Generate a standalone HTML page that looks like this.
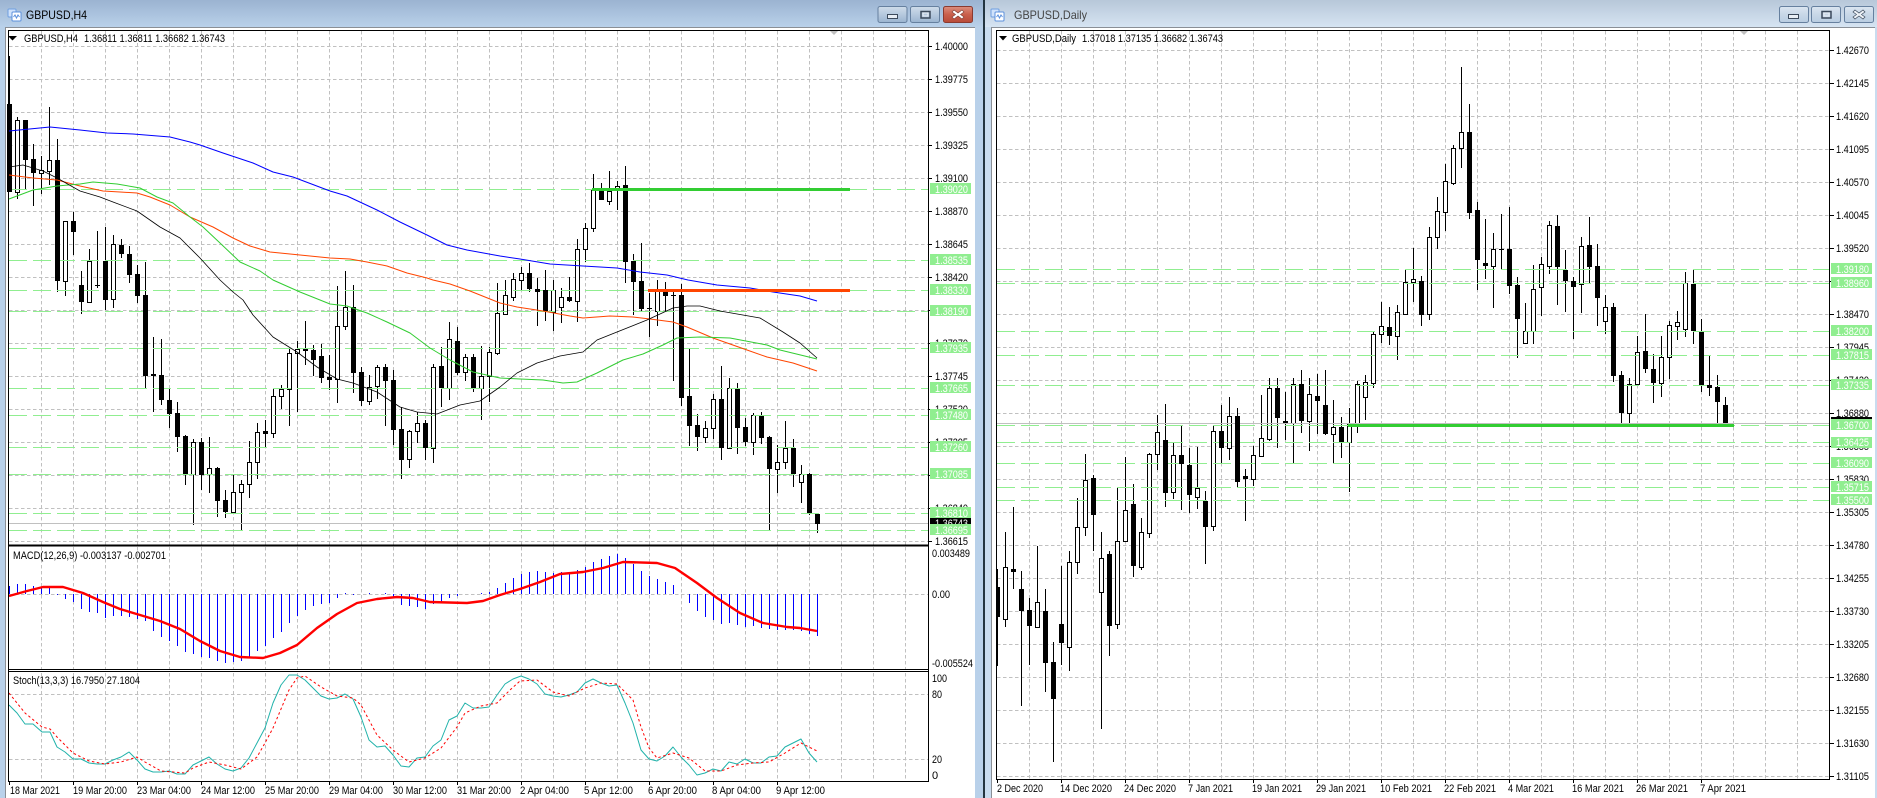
<!DOCTYPE html>
<html><head><meta charset="utf-8"><title>GBPUSD</title>
<style>
html,body{margin:0;padding:0;background:#fff;width:1877px;height:798px;overflow:hidden}
svg{display:block}
text{font-family:"Liberation Sans",sans-serif;font-size:11px;fill:#000}
.l text{fill:#fff}
.grid{fill:none;stroke:#c0c0c0;stroke-width:1;stroke-dasharray:3.5 2.5}
.lev{fill:none;stroke:#90ee90;stroke-width:1;stroke-dasharray:18 6}
.w{fill:none;stroke:#000;stroke-width:1}
.wb{fill:#fff;stroke:#000;stroke-width:1}
.ma{fill:none;stroke-linejoin:round}
</style></head><body>
<svg width="1877" height="798" viewBox="0 0 1877 798" xmlns="http://www.w3.org/2000/svg">
<defs>
<linearGradient id="ta" x1="0" y1="0" x2="0" y2="1"><stop offset="0" stop-color="#9bb3d1"/><stop offset="1" stop-color="#b9d1ea"/></linearGradient>
<linearGradient id="tb" x1="0" y1="0" x2="0" y2="1"><stop offset="0" stop-color="#b7c7d9"/><stop offset="1" stop-color="#d6e4f2"/></linearGradient>
<linearGradient id="bt" x1="0" y1="0" x2="0" y2="1"><stop offset="0" stop-color="#cfdcea"/><stop offset=".5" stop-color="#b6c9de"/><stop offset="1" stop-color="#9bb4d0"/></linearGradient>
<linearGradient id="bu" x1="0" y1="0" x2="0" y2="1"><stop offset="0" stop-color="#dbe6f1"/><stop offset=".5" stop-color="#c8d7e7"/><stop offset="1" stop-color="#b9cde2"/></linearGradient>
<linearGradient id="cl" x1="0" y1="0" x2="0" y2="1"><stop offset="0" stop-color="#dc8f7f"/><stop offset=".5" stop-color="#c9604c"/><stop offset="1" stop-color="#b84a38"/></linearGradient>
<g id="ic"><rect x="1" y="1" width="8" height="8" rx="1" fill="#cfe2fb" stroke="#6f9fe0"/><rect x="5" y="4" width="9" height="9" rx="1" fill="#fff" stroke="#5b90dc"/><path d="M6.5 9l1.5-2 1.5 3 1.500-3 1.500 2" fill="none" stroke="#5b90dc"/></g>
</defs>
<rect width="1877" height="798" fill="#fff"/>
<!-- chrome -->
<rect x="0" y="27" width="5" height="771" fill="#b9d1ea"/>
<rect x="975" y="27" width="8" height="771" fill="#b9d1ea"/>
<rect x="983" y="0" width="2" height="798" fill="#23343f"/>
<rect x="985" y="27" width="6" height="771" fill="#c9dcef"/>
<rect x="1875" y="27" width="2" height="771" fill="#c9dcef"/>
<rect x="0" y="0" width="983" height="27" fill="url(#ta)"/>
<rect x="985" y="0" width="892" height="27" fill="url(#tb)"/>
<rect x="5" y="27" width="970" height="1" fill="#8a8f96"/>
<rect x="5" y="27" width="1" height="771" fill="#8a8f96"/>
<rect x="991" y="27" width="884" height="1" fill="#8a8f96"/>
<rect x="991" y="27" width="1" height="771" fill="#8a8f96"/>
<use href="#ic" x="7" y="8"/><use href="#ic" x="990" y="8"/>
<text x="26" y="19" style="font-size:12px" textLength="61" lengthAdjust="spacingAndGlyphs">GBPUSD,H4</text>
<text x="1014" y="19" style="font-size:12px;fill:#444" textLength="73" lengthAdjust="spacingAndGlyphs">GBPUSD,Daily</text>
<!-- buttons -->
<g stroke="#66809f">
<rect x="878" y="6.500" width="29" height="16" rx="2" fill="url(#bt)"/>
<rect x="910.500" y="6.500" width="29" height="16" rx="2" fill="url(#bt)"/>
<rect x="943.500" y="6.500" width="29" height="16" rx="2" fill="url(#cl)" stroke="#8a3a30"/>
<rect x="1779.500" y="6.500" width="29" height="16" rx="2" fill="url(#bu)"/>
<rect x="1811.500" y="6.500" width="29" height="16" rx="2" fill="url(#bu)"/>
<rect x="1844.500" y="6.500" width="29" height="16" rx="2" fill="url(#bu)"/>
</g>
<g fill="#e8eef5" stroke="#3c4a5c">
<rect x="887.500" y="14.500" width="10" height="4"/>
<rect x="1788.500" y="14.500" width="10" height="4"/>
</g>
<g fill="none" stroke="#3c4a5c" stroke-width="1.500">
<rect x="921" y="11.500" width="9" height="6.500"/>
<rect x="1822" y="11.500" width="9" height="6.500"/>
</g>
<g fill="none" stroke="#e8eef5" stroke-width="1">
<rect x="923" y="13" width="5" height="3"/><rect x="1824" y="13" width="5" height="3"/>
</g>
<path d="M954 10l4 3 4-3 2 2-3.500 2.500 3.500 2.500-2 2-4-3-4 3-2-2 3.500-2.500-3.500-2.500z" fill="#fff" stroke="#7a3a30" stroke-width=".6"/>
<path d="M1855 10l4 3 4-3 2 2-3.500 2.500 3.500 2.500-2 2-4-3-4 3-2-2 3.500-2.500-3.500-2.500z" fill="#eef2f7" stroke="#3c4a5c" stroke-width=".7"/>

<!-- H4 grid -->
<path class="grid" d="M41.500 31V781M73.500 31V781M105.500 31V781M137.500 31V781M169.500 31V781M201.500 31V781M233.500 31V781M265.500 31V781M297.500 31V781M329.500 31V781M361.500 31V781M393.500 31V781M425.500 31V781M457.500 31V781M489.500 31V781M521.500 31V781M553.500 31V781M585.500 31V781M617.500 31V781M649.500 31V781M681.500 31V781M713.500 31V781M745.500 31V781M777.500 31V781M809.500 31V781M841.500 31V781M873.500 31V781M905.500 31V781"/>
<path class="grid" d="M9 46.500H928M9 79.500H928M9 112.500H928M9 145.500H928M9 178.500H928M9 211.500H928M9 244.500H928M9 277.500H928M9 310.500H928M9 343.500H928M9 376.500H928M9 409.500H928M9 442.500H928M9 475.500H928M9 508.500H928M9 541.500H928M9 594.500H928M9 694.500H928M9 759.500H928"/>
<!-- H4 wicks -->
<path class="w" d="M9.500 56V192M17.500 117V199M25.500 120V190M33.500 144V206M41.500 156V194M49.500 107V185M57.500 139V292M65.500 221V296M73.500 212V255M81.500 271V314M89.500 249V303M97.500 231V288M105.500 227V310M113.500 235V308M121.500 239V258M129.500 246V283M137.500 265V303M145.500 262V388M153.500 337V412M161.500 339V405M169.500 388V428M177.500 402V452M185.500 435V485M193.500 439V525M201.500 438V490M209.500 437V493M217.500 467V517M225.500 490V518M233.500 474V513M241.500 480V530M249.500 441V498M257.500 423V479M265.500 420V448M273.500 388V438M281.500 385V409M289.500 348V426M297.500 341V412M305.500 321V365M313.500 345V376M321.500 344V383M329.500 355V390M337.500 286V403M345.500 271V330M353.500 285V393M361.500 367V406M369.500 375V405M377.500 365V399M385.500 364V426M393.500 370V445M401.500 407V479M409.500 430V468M417.500 412V443M425.500 420V460M433.500 364V463M441.500 347V407M449.500 322V400M457.500 327V375M465.500 354V381M473.500 354V392M481.500 346V420M489.500 347V402M497.500 283V355M505.500 280V315M513.500 273V301M521.500 267V290M529.500 263V292M537.500 278V326M545.500 270V321M553.500 280V331M561.500 288V323M569.500 277V302M577.500 239V322M585.500 223V262M593.500 174V232M601.500 183V200M609.500 171V205M617.500 181V210M625.500 166V283M633.500 254V315M641.500 243V311M649.500 293V337M657.500 280V326M665.500 282V311M673.500 291V381M681.500 284V406M689.500 349V446M697.500 414V451M705.500 421V443M713.500 394V439M721.500 366V460M729.500 378V449M737.500 383V454M745.500 418V446M753.500 413V455M761.500 412V444M769.500 436V530M777.500 445V493M785.500 421V469M793.500 439V487M801.500 465V503M809.500 473V515M817.500 513V533"/>
<!-- H4 white bodies -->
<g transform="translate(0 .5)"><path class="wb" d="M15.500 120h4V192h-4zM39.500 170h4V173h-4zM47.500 160h4V171h-4zM63.500 221h4V281h-4zM87.500 261h4V302h-4zM111.500 244h4V299h-4zM191.500 442h4V474h-4zM207.500 468h4V474h-4zM231.500 492h4V512h-4zM239.500 484h4V492h-4zM247.500 462h4V484h-4zM255.500 432h4V462h-4zM271.500 396h4V433h-4zM279.500 389h4V396h-4zM287.500 353h4V389h-4zM295.500 349h4V353h-4zM335.500 326h4V379h-4zM343.500 307h4V326h-4zM367.500 387h4V401h-4zM375.500 367h4V386h-4zM407.500 431h4V459h-4zM415.500 423h4V431h-4zM431.500 367h4V448h-4zM447.500 339h4V388h-4zM463.500 357h4V372h-4zM479.500 376h4V388h-4zM487.500 352h4V376h-4zM495.500 313h4V353h-4zM503.500 295h4V314h-4zM511.500 279h4V297h-4zM519.500 273h4V280h-4zM551.500 290h4V312h-4zM559.500 297h4V307h-4zM575.500 249h4V301h-4zM583.500 228h4V249h-4zM591.500 190h4V228h-4zM607.500 191h4V201h-4zM615.500 186h4V189h-4zM655.500 290h4V311h-4zM703.500 428h4V437h-4zM711.500 399h4V428h-4zM727.500 388h4V448h-4zM751.500 415h4V442h-4zM775.500 462h4V469h-4zM783.500 448h4V462h-4zM799.500 474h4V482h-4z"/></g>
<!-- H4 levels -->
<path class="lev" d="M9 189.500H928M9 260.500H928M9 290.500H928M9 311.500H928M9 348.500H928M9 388.500H928M9 415.500H928M9 447.500H928M9 474.500H928M9 513.500H928M9 530.500H928"/>
<path d="M9 523.500H928" stroke="#c0c0c0" fill="none"/>
<!-- H4 black bodies -->
<path d="M7 104h5V192h-5zM23 120h5V160h-5zM31 159h5V173h-5zM55 160h5V281h-5zM71 221h5V232h-5zM79 285h5V302h-5zM95 285h5V286h-5zM103 261h5V300h-5zM119 245h5V254h-5zM127 254h5V275h-5zM135 274h5V296h-5zM143 295h5V376h-5zM151 374h5V376h-5zM159 375h5V400h-5zM167 400h5V414h-5zM175 413h5V437h-5zM183 436h5V474h-5zM199 442h5V475h-5zM215 468h5V501h-5zM223 500h5V512h-5zM263 431h5V434h-5zM303 349h5V351h-5zM311 350h5V360h-5zM319 356h5V378h-5zM327 377h5V380h-5zM351 307h5V373h-5zM359 372h5V401h-5zM383 367h5V381h-5zM391 380h5V430h-5zM399 429h5V460h-5zM423 423h5V448h-5zM439 366h5V388h-5zM455 341h5V373h-5zM471 357h5V388h-5zM527 273h5V289h-5zM535 289h5V292h-5zM543 290h5V311h-5zM567 297h5V301h-5zM599 191h5V200h-5zM623 185h5V262h-5zM631 261h5V282h-5zM639 281h5V309h-5zM647 308h5V309h-5zM663 292h5V296h-5zM671 295h5V296h-5zM679 295h5V398h-5zM687 396h5V426h-5zM695 425h5V437h-5zM719 399h5V448h-5zM735 389h5V428h-5zM743 427h5V442h-5zM759 416h5V438h-5zM767 437h5V469h-5zM791 448h5V474h-5zM807 474h5V513h-5zM815 514h5V524h-5z" fill="#000"/>
<!-- H4 MAs -->
<polyline class="ma" style="stroke-width:1" stroke="#0000ff" points="9,131 50,127 80,130 107,133 133,134 170,137 190,142 200,145 223,153 253,163 273,172 293,177 330,191 347,196 377,210 400,222 427,235 447,245 467,250 500,256 520,259 550,264 583,266 617,268 640,272 667,275 688,280 717,285 750,288 773,292 800,296 817,301"/>
<polyline class="ma" style="stroke-width:1" stroke="#ff4500" points="9,175 33,178 57,180 80,186 103,191 120,192 137,193 150,197 170,205 190,217 213,227 233,238 250,246 270,252 300,255 330,258 350,259 367,262 387,266 407,273 427,278 433,280 450,284 470,291 500,303 517,307 543,311 570,316 583,318 610,316 633,317 650,319 673,322 687,327 713,338 747,350 767,357 793,363 817,371"/>
<polyline class="ma" style="stroke-width:1" stroke="#32cd32" points="9,199 33,190 57,186 80,184 93,182 117,184 140,188 157,197 173,203 190,217 203,227 220,243 240,262 260,271 273,280 300,292 330,304 347,306 367,313 387,322 410,333 430,348 450,360 473,372 500,378 520,379 543,380 563,383 577,382 597,373 623,360 643,354 663,345 677,338 700,337 730,338 767,345 780,350 817,359"/>
<polyline class="ma" style="stroke-width:.8" stroke="#000" points="9,167 23,165 43,171 57,178 80,191 100,197 113,202 137,211 160,227 180,238 200,258 220,280 233,292 243,300 253,315 273,337 297,352 317,367 337,379 353,383 377,392 400,407 417,412 437,414 460,405 480,401 500,387 517,373 537,363 560,356 583,352 597,340 617,332 647,320 673,308 687,306 700,306 720,311 760,318 783,332 800,343 817,358"/>
<path d="M592 189.500H850" stroke="#32cd32" stroke-width="3" fill="none"/>
<path d="M648 290.500H850" stroke="#ff4500" stroke-width="3" fill="none"/>
<path d="M830 31h8l-4 4z" fill="#c0c0c0"/>
<!-- MACD hist -->
<path d="M9.500 594V586M17.500 594V584M25.500 594V584M33.500 594V586M41.500 594V587M49.500 594V588M57.500 594V595M65.500 594V599M73.500 594V602M81.500 594V609M89.500 594V612M97.500 594V613M105.500 594V618M113.500 594V616M121.500 594V616M129.500 594V617M137.500 594V619M145.500 594V621M153.500 594V631M161.500 594V637M169.500 594V641M177.500 594V646M185.500 594V652M193.500 594V654M201.500 594V657M209.500 594V658M217.500 594V661M225.500 594V663M233.500 594V662M241.500 594V661M249.500 594V657M257.500 594V651M265.500 594V646M273.500 594V638M281.500 594V632M289.500 594V623M297.500 594V616M305.500 594V610M313.500 594V606M321.500 594V604M329.500 594V603M337.500 594V598M345.500 594V593M353.500 594V595M369.500 594V593M385.500 594V593M393.500 594V598M401.500 594V605M409.500 594V606M417.500 594V607M425.500 594V609M433.500 594V604M441.500 594V603M449.500 594V598M457.500 594V596M481.500 594V593M489.500 594V592M497.500 594V588M505.500 594V583M513.500 594V578M521.500 594V574M529.500 594V572M537.500 594V571M545.500 594V572M553.500 594V573M561.500 594V572M569.500 594V573M577.500 594V570M585.500 594V567M593.500 594V562M601.500 594V559M609.500 594V556M617.500 594V554M625.500 594V558M633.500 594V564M641.500 594V571M649.500 594V576M657.500 594V579M665.500 594V582M673.500 594V585M689.500 594V603M697.500 594V611M705.500 594V617M713.500 594V620M721.500 594V624M729.500 594V623M737.500 594V625M745.500 594V627M753.500 594V626M761.500 594V628M769.500 594V629M777.500 594V630M785.500 594V630M793.500 594V630M801.500 594V631M809.500 594V634M817.500 594V636" stroke="#0000ff" fill="none"/>
<polyline class="ma" style="stroke-width:2.4" stroke="#ff0000" points="9,596 27,591 43,587 63,587 83,593 103,602 120,609 140,615 160,621 180,629 200,641 220,651 240,657 263,658 280,653 297,645 317,628 337,614 357,603 377,599 397,597 413,598 430,602 467,603 483,601 500,595 520,589 540,582 560,574 583,572 603,568 623,562 657,563 675,568 697,583 717,598 740,613 763,623 787,627 800,628 817,631"/>
<!-- Stoch -->
<polyline class="ma" style="stroke-width:1" stroke="#20b2aa" points="9,705 17,713 25,724 33,724 42,732 50,732 57,747 65,752 73,759 81,759 89,763 97,764 105,764 113,760 121,757 129,752 137,760 145,769 153,772 161,772 169,771 177,774 185,774 193,765 201,761 209,757 217,764 225,769 233,771 241,768 249,758 257,743 265,728 273,703 281,685 289,675 297,675 305,680 313,688 321,696 329,699 337,698 345,694 353,699 361,717 369,740 377,747 385,746 393,755 401,766 409,767 417,758 425,757 433,746 441,740 449,720 457,716 465,703 473,708 481,708 489,707 497,695 505,684 513,679 521,676 529,679 537,684 545,694 553,696 561,697 569,695 577,692 585,683 593,679 601,683 609,686 617,685 625,703 633,723 641,750 649,759 657,761 665,756 673,747 681,757 689,765 697,775 705,773 713,769 721,771 729,762 737,764 745,759 753,763 761,763 769,757 777,756 785,747 793,743 801,739 809,753 817,762"/>
<polyline class="ma" style="stroke-width:1" stroke="#ff0000" stroke-dasharray="2.500 2.500" points="9,693 25,713 42,727 50,729 57,737 73,753 89,761 105,764 121,762 137,757 145,762 161,771 185,773 193,768 209,762 225,765 241,769 257,757 265,743 273,728 289,690 297,678 305,676 321,687 337,696 353,698 361,705 377,735 393,750 409,762 425,758 441,748 457,727 465,713 481,706 497,703 510,690 520,681 537,680 553,692 569,696 585,688 601,683 617,684 633,700 641,727 649,748 657,758 673,753 689,758 705,771 721,771 737,765 753,763 769,762 785,753 801,743 817,751"/>
<!-- H4 frames -->
<g fill="#000">
<rect x="8" y="30" width="921" height="1"/>
<rect x="8" y="30" width="1" height="752"/>
<rect x="928" y="30" width="1" height="752"/>
<rect x="8" y="544.500" width="921" height="2"/>
<rect x="8" y="669" width="921" height="1"/>
<rect x="8" y="671" width="921" height="1"/>
<rect x="8" y="781" width="921" height="1"/>
</g>
<rect x="9" y="670" width="919" height="1" fill="#fff"/>
<path d="M928 46.500h4M928 79.500h4M928 112.500h4M928 145.500h4M928 178.500h4M928 211.500h4M928 244.500h4M928 277.500h4M928 310.500h4M928 343.500h4M928 376.500h4M928 409.500h4M928 442.500h4M928 475.500h4M928 508.500h4M928 541.500h4M9.500 781v4M73.500 781v4M137.500 781v4M201.500 781v4M265.500 781v4M329.500 781v4M393.500 781v4M457.500 781v4M521.500 781v4M585.500 781v4M649.500 781v4M713.500 781v4M777.500 781v4" stroke="#000" fill="none"/>
<!-- H4 text -->
<path d="M8 36h9l-4.500 4.500z" fill="#000"/>
<text x="24" y="42" textLength="54" lengthAdjust="spacingAndGlyphs">GBPUSD,H4</text>
<text x="84" y="42" textLength="141" lengthAdjust="spacingAndGlyphs">1.36811 1.36811 1.36682 1.36743</text>
<text x="13" y="559" textLength="153" lengthAdjust="spacingAndGlyphs">MACD(12,26,9) -0.003137 -0.002701</text>
<text x="13" y="684" textLength="127" lengthAdjust="spacingAndGlyphs">Stoch(13,3,3) 16.7950 27.1804</text>
<g>
<text x="935" y="50" textLength="33" lengthAdjust="spacingAndGlyphs">1.40000</text>
<text x="935" y="83" textLength="33" lengthAdjust="spacingAndGlyphs">1.39775</text>
<text x="935" y="116" textLength="33" lengthAdjust="spacingAndGlyphs">1.39550</text>
<text x="935" y="149" textLength="33" lengthAdjust="spacingAndGlyphs">1.39325</text>
<text x="935" y="182" textLength="33" lengthAdjust="spacingAndGlyphs">1.39100</text>
<text x="935" y="215" textLength="33" lengthAdjust="spacingAndGlyphs">1.38870</text>
<text x="935" y="248" textLength="33" lengthAdjust="spacingAndGlyphs">1.38645</text>
<text x="935" y="281" textLength="33" lengthAdjust="spacingAndGlyphs">1.38420</text>
<text x="935" y="347" textLength="33" lengthAdjust="spacingAndGlyphs">1.37970</text>
<text x="935" y="380" textLength="33" lengthAdjust="spacingAndGlyphs">1.37745</text>
<text x="935" y="413" textLength="33" lengthAdjust="spacingAndGlyphs">1.37520</text>
<text x="935" y="446" textLength="33" lengthAdjust="spacingAndGlyphs">1.37295</text>
<text x="935" y="479" textLength="33" lengthAdjust="spacingAndGlyphs">1.37065</text>
<text x="935" y="512" textLength="33" lengthAdjust="spacingAndGlyphs">1.36840</text>
<text x="935" y="545" textLength="33" lengthAdjust="spacingAndGlyphs">1.36615</text>
<text x="932" y="557" textLength="38" lengthAdjust="spacingAndGlyphs">0.003489</text>
<text x="932" y="598" textLength="18" lengthAdjust="spacingAndGlyphs">0.00</text>
<text x="932" y="667" textLength="41" lengthAdjust="spacingAndGlyphs">-0.005524</text>
<text x="932" y="682" textLength="15" lengthAdjust="spacingAndGlyphs">100</text>
<text x="932" y="698" textLength="10" lengthAdjust="spacingAndGlyphs">80</text>
<text x="932" y="763" textLength="10" lengthAdjust="spacingAndGlyphs">20</text>
<text x="932" y="779">0</text>
<text x="10" y="794" textLength="50" lengthAdjust="spacingAndGlyphs">18 Mar 2021</text>
<text x="73" y="794" textLength="54" lengthAdjust="spacingAndGlyphs">19 Mar 20:00</text>
<text x="137" y="794" textLength="54" lengthAdjust="spacingAndGlyphs">23 Mar 04:00</text>
<text x="201" y="794" textLength="54" lengthAdjust="spacingAndGlyphs">24 Mar 12:00</text>
<text x="265" y="794" textLength="54" lengthAdjust="spacingAndGlyphs">25 Mar 20:00</text>
<text x="329" y="794" textLength="54" lengthAdjust="spacingAndGlyphs">29 Mar 04:00</text>
<text x="393" y="794" textLength="54" lengthAdjust="spacingAndGlyphs">30 Mar 12:00</text>
<text x="457" y="794" textLength="54" lengthAdjust="spacingAndGlyphs">31 Mar 20:00</text>
<text x="520" y="794" textLength="49" lengthAdjust="spacingAndGlyphs">2 Apr 04:00</text>
<text x="584" y="794" textLength="49" lengthAdjust="spacingAndGlyphs">5 Apr 12:00</text>
<text x="648" y="794" textLength="49" lengthAdjust="spacingAndGlyphs">6 Apr 20:00</text>
<text x="712" y="794" textLength="49" lengthAdjust="spacingAndGlyphs">8 Apr 04:00</text>
<text x="776" y="794" textLength="49" lengthAdjust="spacingAndGlyphs">9 Apr 12:00</text>
</g>
<!-- H4 labels -->
<g fill="#90ee90">
<rect x="930" y="183" width="41" height="11"/><rect x="930" y="254" width="41" height="11"/><rect x="930" y="284" width="41" height="11"/><rect x="930" y="305" width="41" height="11"/><rect x="930" y="342" width="41" height="11"/><rect x="930" y="382" width="41" height="11"/><rect x="930" y="409" width="41" height="11"/><rect x="930" y="441" width="41" height="11"/><rect x="930" y="468" width="41" height="11"/><rect x="930" y="507" width="41" height="11"/>
</g>
<rect x="930" y="518" width="41" height="11" fill="#000"/>
<text x="935" y="527" style="fill:#fff" textLength="33" lengthAdjust="spacingAndGlyphs">1.36743</text>
<rect x="930" y="524" width="41" height="11" fill="#90ee90"/>
<g class="l">
<text x="935" y="193" textLength="33" lengthAdjust="spacingAndGlyphs">1.39020</text>
<text x="935" y="264" textLength="33" lengthAdjust="spacingAndGlyphs">1.38535</text>
<text x="935" y="294" textLength="33" lengthAdjust="spacingAndGlyphs">1.38330</text>
<text x="935" y="315" textLength="33" lengthAdjust="spacingAndGlyphs">1.38190</text>
<text x="935" y="352" textLength="33" lengthAdjust="spacingAndGlyphs">1.37935</text>
<text x="935" y="392" textLength="33" lengthAdjust="spacingAndGlyphs">1.37665</text>
<text x="935" y="419" textLength="33" lengthAdjust="spacingAndGlyphs">1.37480</text>
<text x="935" y="451" textLength="33" lengthAdjust="spacingAndGlyphs">1.37260</text>
<text x="935" y="478" textLength="33" lengthAdjust="spacingAndGlyphs">1.37085</text>
<text x="935" y="517" textLength="33" lengthAdjust="spacingAndGlyphs">1.36810</text>
<text x="935" y="534" textLength="33" lengthAdjust="spacingAndGlyphs">1.36695</text>
</g>

<!-- DAILY grid -->
<path class="grid" d="M1029.500 31V779M1061.500 31V779M1093.500 31V779M1125.500 31V779M1157.500 31V779M1189.500 31V779M1221.500 31V779M1253.500 31V779M1285.500 31V779M1317.500 31V779M1349.500 31V779M1381.500 31V779M1413.500 31V779M1445.500 31V779M1477.500 31V779M1509.500 31V779M1541.500 31V779M1573.500 31V779M1605.500 31V779M1637.500 31V779M1669.500 31V779M1701.500 31V779M1733.500 31V779M1765.500 31V779M1797.500 31V779"/>
<path class="grid" d="M997 50.500H1830M997 83.500H1830M997 116.500H1830M997 149.500H1830M997 182.500H1830M997 215.500H1830M997 248.500H1830M997 281.500H1830M997 314.500H1830M997 347.500H1830M997 380.500H1830M997 413.500H1830M997 446.500H1830M997 479.500H1830M997 512.500H1830M997 545.500H1830M997 578.500H1830M997 611.500H1830M997 644.500H1830M997 677.500H1830M997 710.500H1830M997 743.500H1830M997 776.500H1830"/>
<!-- DAILY wicks -->
<path class="w" d="M997.500 569V666M1005.500 532V627M1013.500 507V589M1021.500 571V706M1029.500 598V665M1037.500 546V628M1045.500 589V692M1053.500 642V762M1061.500 566V665M1069.500 551V671M1077.500 498V574M1085.500 454V536M1093.500 475V551M1101.500 532V729M1109.500 551V656M1117.500 488V629M1125.500 457V542M1133.500 484V577M1141.500 518V570M1149.500 453V538M1157.500 415V470M1165.500 404V507M1173.500 443V499M1181.500 426V510M1189.500 448V513M1197.500 447V509M1205.500 491V564M1213.500 426V531M1221.500 405V463M1229.500 397V460M1237.500 408V487M1245.500 469V521M1253.500 446V486M1261.500 395V456M1269.500 378V441M1277.500 378V448M1285.500 392V440M1293.500 378V463M1301.500 370V433M1309.500 378V451M1317.500 374V434M1325.500 370V435M1333.500 400V463M1341.500 417V458M1349.500 408V492M1357.500 381V433M1365.500 375V420M1373.500 332V388M1381.500 302V343M1389.500 307V345M1397.500 305V360M1405.500 270V314M1413.500 248V302M1421.500 276V326M1429.500 227V320M1437.500 197V249M1445.500 164V231M1453.500 145V185M1461.500 67V168M1469.500 104V219M1477.500 202V290M1485.500 219V279M1493.500 233V308M1501.500 214V269M1509.500 207V294M1517.500 277V358M1525.500 303V343M1533.500 265V344M1541.500 257V316M1549.500 221V274M1557.500 215V305M1565.500 250V312M1573.500 277V339M1581.500 237V313M1589.500 217V283M1597.500 244V326M1605.500 295V334M1613.500 303V382M1621.500 371V424M1629.500 378V424M1637.500 336V385M1645.500 314V373M1653.500 354V403M1661.500 336V397M1669.500 321V379M1677.500 311V340M1685.500 272V337M1693.500 270V344M1701.500 319V392M1709.500 356V396M1717.500 375V424M1725.500 397V424"/>
<!-- DAILY white bodies -->
<g transform="translate(0 .5)"><path class="wb" d="M1003.500 567h4V619h-4zM1035.500 602h4V627h-4zM1067.500 562h4V647h-4zM1075.500 527h4V562h-4zM1083.500 480h4V527h-4zM1099.500 558h4V592h-4zM1115.500 541h4V624h-4zM1123.500 510h4V541h-4zM1139.500 532h4V567h-4zM1147.500 454h4V533h-4zM1155.500 432h4V454h-4zM1171.500 455h4V492h-4zM1195.500 488h4V497h-4zM1211.500 431h4V526h-4zM1227.500 416h4V448h-4zM1251.500 455h4V479h-4zM1259.500 438h4V456h-4zM1267.500 388h4V439h-4zM1291.500 384h4V423h-4zM1307.500 394h4V421h-4zM1331.500 427h4V434h-4zM1347.500 424h4V442h-4zM1355.500 384h4V424h-4zM1363.500 382h4V397h-4zM1371.500 334h4V383h-4zM1379.500 326h4V334h-4zM1395.500 312h4V336h-4zM1403.500 282h4V314h-4zM1411.500 279h4V282h-4zM1427.500 237h4V314h-4zM1435.500 211h4V237h-4zM1443.500 181h4V212h-4zM1451.500 148h4V183h-4zM1459.500 132h4V148h-4zM1491.500 249h4V266h-4zM1523.500 331h4V343h-4zM1531.500 289h4V331h-4zM1539.500 264h4V287h-4zM1547.500 225h4V266h-4zM1579.500 246h4V284h-4zM1603.500 307h4V321h-4zM1627.500 384h4V413h-4zM1635.500 352h4V384h-4zM1659.500 357h4V383h-4zM1667.500 325h4V357h-4zM1675.500 322h4V326h-4zM1683.500 283h4V329h-4z"/></g>
<!-- DAILY levels -->
<path class="lev" d="M997 269.500H1830M997 283.500H1830M997 331.500H1830M997 355.500H1830M997 385.500H1830M997 425.500H1830M997 442.500H1830M997 463.500H1830M997 487.500H1830M997 500.500H1830"/>
<path d="M997 423.500H1830" stroke="#c0c0c0" fill="none"/>
<!-- DAILY black bodies -->
<path d="M995 587h5V617h-5zM1011 569h5V572h-5zM1019 589h5V611h-5zM1027 610h5V626h-5zM1043 611h5V663h-5zM1051 662h5V699h-5zM1059 624h5V643h-5zM1091 478h5V515h-5zM1107 554h5V626h-5zM1131 504h5V566h-5zM1163 440h5V493h-5zM1179 455h5V464h-5zM1187 465h5V495h-5zM1203 501h5V527h-5zM1219 431h5V448h-5zM1235 416h5V482h-5zM1243 476h5V479h-5zM1275 388h5V418h-5zM1283 421h5V423h-5zM1299 384h5V421h-5zM1315 396h5V401h-5zM1323 405h5V434h-5zM1339 427h5V442h-5zM1387 327h5V336h-5zM1419 281h5V315h-5zM1467 132h5V213h-5zM1475 210h5V260h-5zM1483 263h5V266h-5zM1499 249h5V250h-5zM1507 249h5V286h-5zM1515 285h5V319h-5zM1555 226h5V267h-5zM1563 270h5V281h-5zM1571 281h5V287h-5zM1587 245h5V267h-5zM1595 266h5V298h-5zM1611 307h5V376h-5zM1619 375h5V413h-5zM1643 351h5V369h-5zM1651 369h5V383h-5zM1691 284h5V331h-5zM1699 332h5V385h-5zM1707 385h5V388h-5zM1715 387h5V402h-5zM1723 405h5V423h-5z" fill="#000"/>
<path d="M1348 425.500H1734" stroke="#32cd32" stroke-width="3" fill="none"/>
<path d="M1740 31h8l-4 4z" fill="#c0c0c0"/>
<!-- DAILY frames -->
<rect x="992" y="28" width="4" height="770" fill="#fff"/>
<g fill="#000">
<rect x="996" y="30" width="834" height="1"/>
<rect x="996" y="30" width="1" height="750"/>
<rect x="1829" y="30" width="1" height="750"/>
<rect x="996" y="779" width="834" height="1"/>
</g>
<path d="M1830 50.500h4M1830 83.500h4M1830 116.500h4M1830 149.500h4M1830 182.500h4M1830 215.500h4M1830 248.500h4M1830 281.500h4M1830 314.500h4M1830 347.500h4M1830 380.500h4M1830 413.500h4M1830 446.500h4M1830 479.500h4M1830 512.500h4M1830 545.500h4M1830 578.500h4M1830 611.500h4M1830 644.500h4M1830 677.500h4M1830 710.500h4M1830 743.500h4M1830 776.500h4M997.500 779v4M1061.500 779v4M1125.500 779v4M1189.500 779v4M1253.500 779v4M1317.500 779v4M1381.500 779v4M1445.500 779v4M1509.500 779v4M1573.500 779v4M1637.500 779v4M1701.500 779v4" stroke="#000" fill="none"/>
<!-- DAILY text -->
<path d="M999 36h8l-4 4.500z" fill="#000"/>
<text x="1012" y="42" textLength="64" lengthAdjust="spacingAndGlyphs">GBPUSD,Daily</text>
<text x="1082" y="42" textLength="141" lengthAdjust="spacingAndGlyphs">1.37018 1.37135 1.36682 1.36743</text>
<g>
<text x="1836" y="54" textLength="33" lengthAdjust="spacingAndGlyphs">1.42670</text>
<text x="1836" y="87" textLength="33" lengthAdjust="spacingAndGlyphs">1.42145</text>
<text x="1836" y="120" textLength="33" lengthAdjust="spacingAndGlyphs">1.41620</text>
<text x="1836" y="153" textLength="33" lengthAdjust="spacingAndGlyphs">1.41095</text>
<text x="1836" y="186" textLength="33" lengthAdjust="spacingAndGlyphs">1.40570</text>
<text x="1836" y="219" textLength="33" lengthAdjust="spacingAndGlyphs">1.40045</text>
<text x="1836" y="252" textLength="33" lengthAdjust="spacingAndGlyphs">1.39520</text>
<text x="1836" y="318" textLength="33" lengthAdjust="spacingAndGlyphs">1.38470</text>
<text x="1836" y="351" textLength="33" lengthAdjust="spacingAndGlyphs">1.37945</text>
<text x="1836" y="384" textLength="33" lengthAdjust="spacingAndGlyphs">1.37420</text>
<text x="1836" y="417" textLength="33" lengthAdjust="spacingAndGlyphs">1.36880</text>
<text x="1836" y="450" textLength="33" lengthAdjust="spacingAndGlyphs">1.36355</text>
<text x="1836" y="483" textLength="33" lengthAdjust="spacingAndGlyphs">1.35830</text>
<text x="1836" y="516" textLength="33" lengthAdjust="spacingAndGlyphs">1.35305</text>
<text x="1836" y="549" textLength="33" lengthAdjust="spacingAndGlyphs">1.34780</text>
<text x="1836" y="582" textLength="33" lengthAdjust="spacingAndGlyphs">1.34255</text>
<text x="1836" y="615" textLength="33" lengthAdjust="spacingAndGlyphs">1.33730</text>
<text x="1836" y="648" textLength="33" lengthAdjust="spacingAndGlyphs">1.33205</text>
<text x="1836" y="681" textLength="33" lengthAdjust="spacingAndGlyphs">1.32680</text>
<text x="1836" y="714" textLength="33" lengthAdjust="spacingAndGlyphs">1.32155</text>
<text x="1836" y="747" textLength="33" lengthAdjust="spacingAndGlyphs">1.31630</text>
<text x="1836" y="780" textLength="33" lengthAdjust="spacingAndGlyphs">1.31105</text>
<text x="997" y="792" textLength="46" lengthAdjust="spacingAndGlyphs">2 Dec 2020</text>
<text x="1060" y="792" textLength="52" lengthAdjust="spacingAndGlyphs">14 Dec 2020</text>
<text x="1124" y="792" textLength="52" lengthAdjust="spacingAndGlyphs">24 Dec 2020</text>
<text x="1188" y="792" textLength="45" lengthAdjust="spacingAndGlyphs">7 Jan 2021</text>
<text x="1252" y="792" textLength="50" lengthAdjust="spacingAndGlyphs">19 Jan 2021</text>
<text x="1316" y="792" textLength="50" lengthAdjust="spacingAndGlyphs">29 Jan 2021</text>
<text x="1380" y="792" textLength="52" lengthAdjust="spacingAndGlyphs">10 Feb 2021</text>
<text x="1444" y="792" textLength="52" lengthAdjust="spacingAndGlyphs">22 Feb 2021</text>
<text x="1508" y="792" textLength="46" lengthAdjust="spacingAndGlyphs">4 Mar 2021</text>
<text x="1572" y="792" textLength="52" lengthAdjust="spacingAndGlyphs">16 Mar 2021</text>
<text x="1636" y="792" textLength="52" lengthAdjust="spacingAndGlyphs">26 Mar 2021</text>
<text x="1700" y="792" textLength="46" lengthAdjust="spacingAndGlyphs">7 Apr 2021</text>
</g>
<!-- DAILY labels -->
<rect x="1831" y="417" width="41" height="11" fill="#000"/>
<g fill="#90ee90">
<rect x="1831" y="263" width="41" height="11"/><rect x="1831" y="277" width="41" height="11"/><rect x="1831" y="325" width="41" height="11"/><rect x="1831" y="349" width="41" height="11"/><rect x="1831" y="379" width="41" height="11"/><rect x="1831" y="419" width="41" height="11"/><rect x="1831" y="437" width="41" height="11"/><rect x="1831" y="457" width="41" height="11"/><rect x="1831" y="481" width="41" height="11"/><rect x="1831" y="494" width="41" height="11"/>
</g>
<g class="l">
<text x="1836" y="273" textLength="33" lengthAdjust="spacingAndGlyphs">1.39180</text>
<text x="1836" y="287" textLength="33" lengthAdjust="spacingAndGlyphs">1.38960</text>
<text x="1836" y="335" textLength="33" lengthAdjust="spacingAndGlyphs">1.38200</text>
<text x="1836" y="359" textLength="33" lengthAdjust="spacingAndGlyphs">1.37815</text>
<text x="1836" y="389" textLength="33" lengthAdjust="spacingAndGlyphs">1.37335</text>
<text x="1836" y="429" textLength="33" lengthAdjust="spacingAndGlyphs">1.36700</text>
<text x="1836" y="446" textLength="33" lengthAdjust="spacingAndGlyphs">1.36425</text>
<text x="1836" y="467" textLength="33" lengthAdjust="spacingAndGlyphs">1.36090</text>
<text x="1836" y="491" textLength="33" lengthAdjust="spacingAndGlyphs">1.35715</text>
<text x="1836" y="504" textLength="33" lengthAdjust="spacingAndGlyphs">1.35500</text>
</g>
</svg>
</body></html>
